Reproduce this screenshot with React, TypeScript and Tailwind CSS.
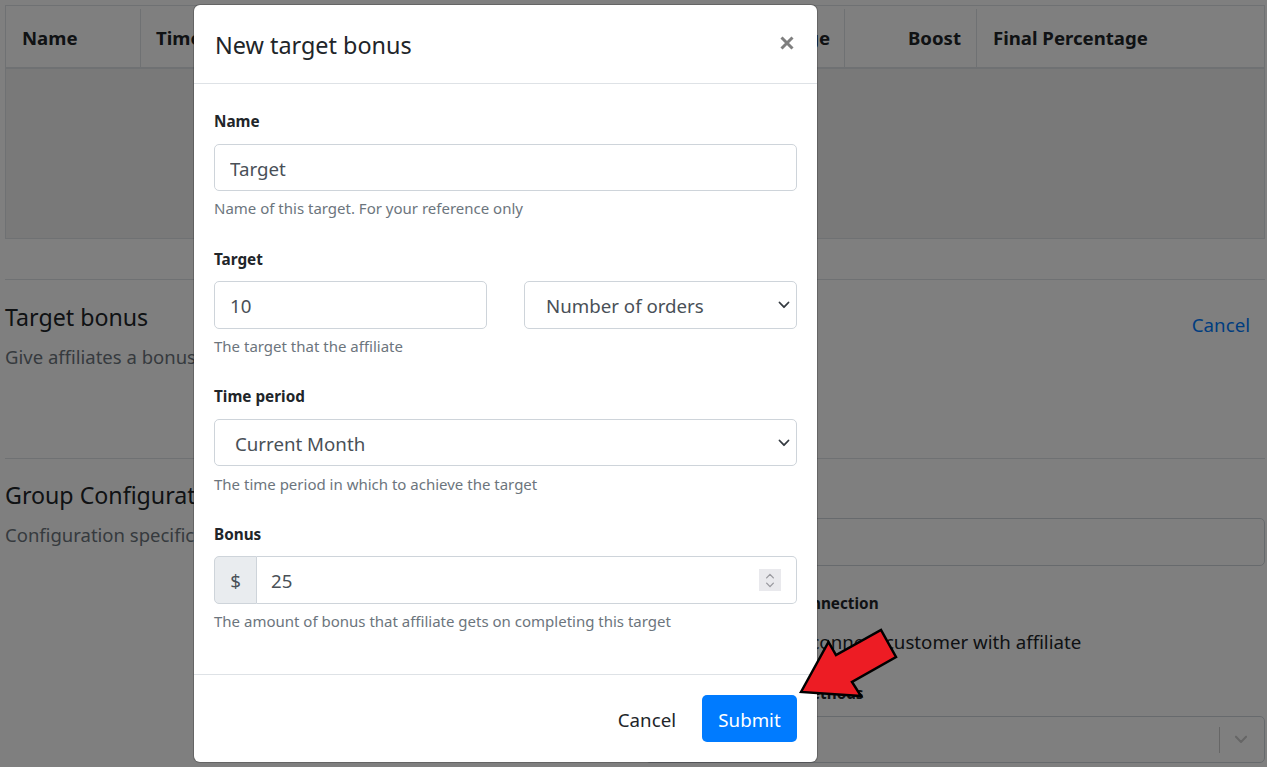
import React from "react";

function Chevron({ className }: { className?: string }) {
  return (
    <svg viewBox="0 0 12 8" className={className} fill="none" stroke="currentColor" strokeWidth="1.8" strokeLinecap="round" strokeLinejoin="round">
      <path d="M1.5 1.5 6 6.2l4.5-4.7" />
    </svg>
  );
}

function Label({ children }: { children: React.ReactNode }) {
  return <label className="block text-[15.3px] leading-[22px] font-bold text-[#212529]">{children}</label>;
}

function Help({ children, className }: { children: React.ReactNode; className?: string }) {
  return <p className={`h-[22px] text-[15px] leading-[20px] text-[#6c757d] ${className ?? "mt-[7px]"}`}>{children}</p>;
}

function Select({ value, className, pad }: { value: string; className?: string; pad: string }) {
  return (
    <div className={`relative ${className ?? ""}`}>
      <select
        defaultValue={value}
        className={`block h-full w-full appearance-none rounded-[5px] border border-[#ced4da] bg-white text-[18.7px] text-[#495057] outline-none ${pad}`}
      >
        <option>{value}</option>
      </select>
      <Chevron className="pointer-events-none absolute right-[7px] top-1/2 h-[8px] w-[12px] -translate-y-1/2 text-[#343a40]" />
    </div>
  );
}

export default function App() {
  return (
    <div className="relative h-[767px] w-[1267px] overflow-hidden bg-white font-['Noto_Sans','Open_Sans',sans-serif] text-[#212529]">
      {/* page behind the modal */}
      <div className="pl-[5px] pr-[2px] pt-[5px]">
        <div className="h-[234px] border border-[#dee2e6] bg-[#f2f2f2]">
          <div className="flex h-[63px] items-center border-b-2 border-[#dee2e6] bg-white pt-[3px] text-[18.6px] font-bold">
            <div className="flex h-full w-[135px] items-center border-r border-[#dee2e6] pl-[16px]">Name</div>
            <div className="flex h-full w-[704px] items-center justify-between border-r border-[#dee2e6] pl-[15px] pr-[14px]">
              <span>Time period</span>
              <span>Percentage</span>
            </div>
            <div className="flex h-full w-[132px] items-center justify-end border-r border-[#dee2e6] pr-[15px]">Boost</div>
            <div className="flex h-full flex-1 items-center pl-[16px]">Final Percentage</div>
          </div>
        </div>

        <div className="mt-[40px] h-[179px] border-t border-[#dee2e6]">
          <div className="flex items-start justify-between pt-[19px]">
            <div>
              <h2 className="text-[23.2px] leading-[36px]">Target bonus</h2>
              <p className="mt-[8px] text-[18.5px] leading-[27px] text-[#6c757d]">Give affiliates a bonus on reaching a target</p>
            </div>
            <a className="mr-[15px] mt-[12px] text-[18.7px] leading-[28px] text-[#007bff]">Cancel</a>
          </div>
        </div>

        <div className="flex border-t border-[#dee2e6] pt-[18px]">
          <div className="w-[640px]">
            <h2 className="text-[23.2px] leading-[36px]">Group Configuration</h2>
            <p className="mt-[8px] text-[18.5px] leading-[27px] text-[#6c757d]">Configuration specific to this group</p>
          </div>
          <div className="flex-1 pt-[41px]">
            <div className="h-[48px] rounded-[5px] border border-[#ced4da] bg-white" />
            <div className="ml-[70px] mt-[26px] text-[15.3px] font-bold leading-[22px]">Customer connection</div>
            <div className="ml-[119px] mt-[14px] text-[18.7px] leading-[28px]">Auto connect customer with affiliate</div>
            <div className="ml-[79px] mt-[26px] text-[15.3px] font-bold leading-[22px]">Payment methods</div>
            <div className="mt-[12px] flex h-[47px] items-center justify-end rounded-[5px] border border-[#ced4da] bg-white">
              <div className="flex h-[26px] w-[45px] items-center justify-center border-l border-[#ccc] pr-[2px]">
                <Chevron className="h-[9px] w-[14px] text-[#cccccc]" />
              </div>
            </div>
          </div>
        </div>
      </div>

      {/* backdrop */}
      <div className="absolute inset-0 bg-black/50" />

      {/* modal */}
      <div className="absolute left-[194px] top-[5px] w-[623px] rounded-[6px] bg-white shadow-[0_0_0_1px_rgba(0,0,0,0.2)]">
        <div className="flex h-[79px] items-start justify-between border-b border-[#dee2e6] pl-[21px] pr-[23px]">
          <h5 className="mt-[22px] text-[23.4px] leading-[36px] text-[#212529]">New target bonus</h5>
          <svg viewBox="0 0 14 14" className="mt-[31px] h-[14px] w-[14px] text-[#7f7f7f]" fill="none" stroke="currentColor" strokeWidth="3">
            <path d="M1.5 1.5l11 11M12.5 1.5l-11 11" />
          </svg>
        </div>

        <div className="px-[20px] pt-[26px]">
          <Label>Name</Label>
          <input
            readOnly
            defaultValue="Target"
            className="mt-[12px] block h-[47px] w-full rounded-[5px] border border-[#ced4da] bg-white px-[15px] pt-[2px] text-[18.7px] text-[#495057] outline-none"
          />
          <Help>Name of this target. For your reference only</Help>

          <div className="mt-[28px]">
            <Label>Target</Label>
            <div className="mt-[11px] flex justify-between">
              <input
                readOnly
                defaultValue="10"
                className="block h-[48px] w-[273px] rounded-[5px] border border-[#ced4da] bg-white px-[15px] text-[18.7px] text-[#495057] outline-none"
              />
              <Select value="Number of orders" className="h-[48px] w-[273px]" pad="pl-[21px] pt-[2px]" />
            </div>
            <Help>The target that the affiliate</Help>
          </div>

          <div className="mt-[27px]">
            <Label>Time period</Label>
            <Select value="Current Month" className="mt-[12px] h-[47px]" pad="pl-[20px] pt-[4px]" />
            <Help className="mt-[8px]">The time period in which to achieve the target</Help>
          </div>

          <div className="mt-[27px]">
            <Label>Bonus</Label>
            <div className="relative mt-[11px] flex h-[48px]">
              <div className="flex w-[43px] items-center justify-center rounded-l-[5px] border border-[#ced4da] bg-[#e9ecef] pt-[2px] text-[18.7px] text-[#495057]">$</div>
              <input
                readOnly
                defaultValue="25"
                className="block h-full flex-1 rounded-r-[5px] border border-l-0 border-[#ced4da] bg-white px-[14px] text-[18.7px] text-[#495057] outline-none"
              />
              <div className="absolute right-[16px] top-[13px] flex h-[22px] w-[22px] flex-col items-center justify-center gap-[3px] bg-[#e9e9ed]">
                <Chevron className="h-[6px] w-[10px] rotate-180 text-[#9a9aa0]" />
                <Chevron className="h-[6px] w-[10px] text-[#9a9aa0]" />
              </div>
            </div>
            <Help>The amount of bonus that affiliate gets on completing this target</Help>
          </div>
        </div>

        <div className="mt-[41px] flex h-[88px] items-start justify-end gap-[26px] border-t border-[#dee2e6] pr-[20px] pt-[20px]">
          <button className="h-[47px] pt-[4px] text-[18.7px] text-[#212529]">Cancel</button>
          <button className="h-[47px] w-[95px] rounded-[5px] bg-[#007bff] pt-[4px] text-[18.7px] text-white">Submit</button>
        </div>
      </div>

      {/* annotation arrow */}
      <svg className="absolute left-[795px] top-[625px] h-[75px] w-[105px]" viewBox="0 0 105 75">
        <path d="M6 67 33.500 17 41 30 86 5 101 32 57 57 66 71Z" fill="#ed1c24" stroke="#000" strokeWidth="2.500" strokeLinejoin="miter" />
      </svg>
    </div>
  );
}
